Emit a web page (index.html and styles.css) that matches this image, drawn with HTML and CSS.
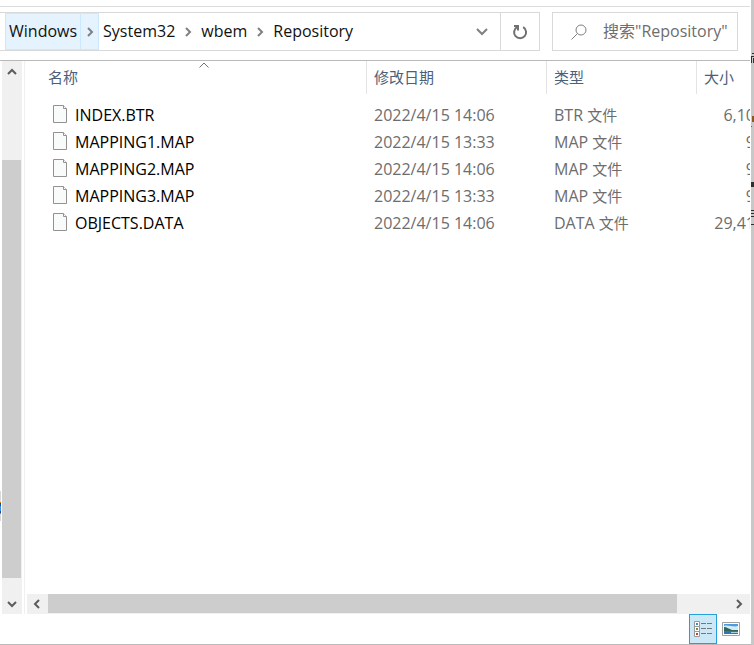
FILE: index.html
```html
<!DOCTYPE html>
<html lang="zh-CN">
<head>
<meta charset="utf-8">
<title>Repository</title>
<link rel="stylesheet" href="styles.css">
</head>
<body>
<div class="desktop">
<main class="window">
  <div class="toolbar">
    <nav class="address" aria-label="Path">
      <a class="crumb crumb-hot" href="#">Windows</a>
      <button class="sep sep-hot" aria-label="Windows"><svg width="8" height="10" viewBox="0 0 8 10"><path d="M2 1l4 4-4 4"/></svg></button>
      <a class="crumb" href="#">System32</a>
      <button class="sep" aria-label="System32"><svg width="8" height="10" viewBox="0 0 8 10"><path d="M2 1l4 4-4 4"/></svg></button>
      <a class="crumb" href="#">wbem</a>
      <button class="sep" aria-label="wbem"><svg width="8" height="10" viewBox="0 0 8 10"><path d="M2 1l4 4-4 4"/></svg></button>
      <a class="crumb" href="#">Repository</a>
      <button class="history" aria-label="History"><svg width="12" height="8" viewBox="0 0 12 8"><path d="M1 1l5 5 5-5"/></svg></button>
    </nav>
    <button class="refresh" aria-label="Refresh"><svg width="16" height="16" viewBox="0 0 16 16"><path d="M11.200 3.200A6 6 0 1 1 5 3.200"/><path d="M2 2h4v4.500"/></svg></button>
    <label class="search">
      <svg width="18" height="18" viewBox="0 0 18 18"><circle cx="11" cy="7" r="5"/><path d="M7.400 10.600L1.500 16.500"/></svg>
      <input type="text" aria-label="Search" placeholder="搜索&quot;Repository&quot;">
    </label>
  </div>

  <div class="body">
    <div class="vscroll">
      <button class="arrow-v" aria-label="Up"><svg width="10" height="8" viewBox="0 0 10 8"><path d="M1 6l4-4 4 4"/></svg></button>
      <div class="v-before"></div>
      <div class="v-thumb"></div>
      <div class="v-after"></div>
      <button class="arrow-v" aria-label="Down"><svg width="10" height="8" viewBox="0 0 10 8"><path d="M1 2l4 4 4-4"/></svg></button>
    </div>
    <section class="content">
      <div class="list">
        <table>
          <colgroup><col class="c-name"><col class="c-date"><col class="c-type"><col class="c-size"></colgroup>
          <thead>
            <tr>
              <th class="sorted">名称<svg class="sort" width="10" height="6" viewBox="0 0 10 6"><path d="M.5 5.500L5 1l4.500 4.500"/></svg></th>
              <th>修改日期</th><th>类型</th><th>大小</th>
            </tr>
          </thead>
          <tbody>
            <tr><td><svg class="file" width="14" height="18" viewBox="0 0 14 18"><path d="M.5.5h10l3 3v14H.5z"/><path d="M10.500.5v3h3"/></svg>INDEX.BTR</td><td>2022/4/15 14:06</td><td>BTR <span class="zh">文件</span></td><td>6,10</td></tr>
            <tr><td><svg class="file" width="14" height="18" viewBox="0 0 14 18"><path d="M.5.5h10l3 3v14H.5z"/><path d="M10.500.5v3h3"/></svg>MAPPING1.MAP</td><td>2022/4/15 13:33</td><td>MAP <span class="zh">文件</span></td><td>9</td></tr>
            <tr><td><svg class="file" width="14" height="18" viewBox="0 0 14 18"><path d="M.5.5h10l3 3v14H.5z"/><path d="M10.500.5v3h3"/></svg>MAPPING2.MAP</td><td>2022/4/15 14:06</td><td>MAP <span class="zh">文件</span></td><td>9</td></tr>
            <tr><td><svg class="file" width="14" height="18" viewBox="0 0 14 18"><path d="M.5.5h10l3 3v14H.5z"/><path d="M10.500.5v3h3"/></svg>MAPPING3.MAP</td><td>2022/4/15 13:33</td><td>MAP <span class="zh">文件</span></td><td>9</td></tr>
            <tr><td><svg class="file" width="14" height="18" viewBox="0 0 14 18"><path d="M.5.5h10l3 3v14H.5z"/><path d="M10.500.5v3h3"/></svg>OBJECTS.DATA</td><td>2022/4/15 14:06</td><td>DATA <span class="zh">文件</span></td><td>29,41</td></tr>
          </tbody>
        </table>
      </div>
      <div class="hscroll">
        <button class="arrow-h" aria-label="Left"><svg width="8" height="10" viewBox="0 0 8 10"><path d="M6 1L2 5l4 4"/></svg></button>
        <div class="h-thumb"></div>
        <div class="h-after"></div>
        <button class="arrow-h" aria-label="Right"><svg width="8" height="10" viewBox="0 0 8 10"><path d="M2 1l4 4-4 4"/></svg></button>
      </div>
    </section>
  </div>

  <footer class="status">
    <button class="view view-on" aria-label="Details">
      <svg width="18" height="16" viewBox="0 0 18 16">
        <g fill="#fff" stroke="#999"><path d="M.5.5h5v5h-5zM.5 5.500h5v5h-5zM.5 10.500h5v5h-5z"/></g>
        <path fill="#3f8fb5" d="M2 2h2v2H2z"/><path fill="#7c8a3c" d="M2 7h2v2H2z"/><path fill="#c0442c" d="M2 12h2v2H2z"/>
        <path stroke="#777" d="M7 2.500h5M13 2.500h5M7 7.500h5M13 7.500h5M7 12.500h5M13 12.500h5"/>
      </svg>
    </button>
    <button class="view" aria-label="Large icons">
      <svg width="18" height="14" viewBox="0 0 18 14">
        <path fill="#fff" stroke="#a0a0a0" d="M.5.5h17v13H.5z"/>
        <path fill="#4d9be0" d="M2 2h14v10H2z"/>
        <path fill="#d4ecf8" d="M2 4c3-1 4 0 6 0s5 1 8 0v4H2z"/>
        <path fill="#31665a" d="M2 5c3 0 5 2 8 3h6v1H2z"/>
        <path fill="#2d78b4" d="M2 9h14v3H2z"/>
        <path fill="#a9cfe4" d="M9 10h7v1H9z"/>
      </svg>
    </button>
  </footer>
</main>
<svg class="behind" width="3" height="240" viewBox="0 0 3 240">
  <path fill="#303030" d="M1 53h2v1H1zM0 56h3v1H0zM0 57h1v6H0zM2 58h1v5H2zM0 182h3v5H0zM0 210h3v1H0zM0 213h3v1H0zM0 216h3v1H0zM0 224h3v1H0z"/>
  <path fill="#8a5a20" d="M1 116h2v6H1z"/>
  <path fill="#4a6ab0" d="M0 126h1v1H0z"/>
</svg>
<svg class="behind-left" width="1" height="30" viewBox="0 0 1 30">
  <path fill="#d8d8d8" d="M0 0h1v30H0z"/><path fill="#c87820" d="M0 11h1v12H0z"/><path fill="#1c4f8c" d="M0 12h1v10H0z"/><path fill="#3c8fe0" d="M0 15h1v5H0z"/>
</svg>
</div>
</body>
</html>
```

FILE: styles.css
```css
* { box-sizing: border-box; }

body {
  margin: 0;
  color: #111;
  font: 16px/24px "Open Sans", "Noto Sans CJK SC", sans-serif;
}

button {
  display: flex;
  align-items: center;
  justify-content: center;
  padding: 0;
  border: 0;
  background: none;
}

svg { flex: none; fill: none; }

.desktop {
  position: relative;
  height: 100vh;
  padding-right: 3px;
  background: #c8c8c8;
}

.window {
  display: flex;
  flex-direction: column;
  height: 100%;
  padding-top: 6px;
  border-bottom: 1px solid #bbb;
  background: #fff;
}

.toolbar {
  display: flex;
  padding: 5px 12px 9px 0;
  margin-right: 1px;
  border-top: 1px solid #dcdcdc;
  border-bottom: 1px solid #b9b9b9;
}

.address {
  display: flex;
  flex: 1;
  height: 39px;
  padding-left: 5px;
  border: solid #d9d9d9;
  border-width: 1px 0;
}

.crumb {
  display: flex;
  align-items: center;
  padding: 0 4px 2px;
  color: #111;
  text-decoration: none;
}

.crumb-hot { border: 1px solid #cce8ff; padding: 0 3px 2px; background: #e5f3ff; }
.sep { width: 18px; }
.sep-hot { border: 1px solid #cce8ff; border-left: 0; background: #e5f3ff; }
.sep svg, .history svg { stroke: #808080; stroke-width: 2; }
.history { width: 37px; margin-left: auto; }

.refresh {
  width: 40px;
  height: 39px;
  border: 1px solid #d9d9d9;
}

.refresh svg { stroke: #707070; stroke-width: 2; }

.search {
  display: flex;
  align-items: center;
  gap: 15px;
  width: 186px;
  margin-left: 12px;
  padding-left: 17px;
  border: 1px solid #d9d9d9;
}

.search svg { stroke: #808080; stroke-width: 1; }

.search input {
  flex: 1;
  min-width: 0;
  padding: 0 0 2px;
  border: 0;
  outline: 0;
  font: 16px/24px "Open Sans", "Noto Sans CJK SC", sans-serif;
}

.search input::placeholder { color: #6d6d6d; opacity: 1; }

.body {
  display: flex;
  flex: 1;
  min-height: 0;
  padding-left: 2px;
}

.vscroll {
  display: flex;
  flex-direction: column;
  width: 20px;
  background: #f0f0f0;
}

.arrow-v { height: 21px; }
.arrow-v svg, .arrow-h svg { stroke: #5c5c5c; stroke-width: 2; }
.v-before { flex: 78; }
.v-thumb { flex: 418; margin-right: 1px; background: #cdcdcd; }
.v-after { flex: 15; }

.content {
  display: flex;
  flex: 1;
  flex-direction: column;
  min-width: 0;
  margin-left: 2px;
  border-left: 1px solid #f0f0f0;
}

.list {
  flex: 1;
  min-height: 0;
  margin-right: 1px;
  overflow: hidden;
}

table {
  width: calc(100% + 5px);
  border-collapse: separate;
  border-spacing: 0;
  table-layout: fixed;
}

.c-date { width: 180px; }
.c-type { width: 150px; }
.c-size { width: 58px; }

th {
  position: relative;
  height: 33px;
  padding: 0 0 2px 7px;
  border-right: 1px solid #e3e3e3;
  color: #4c607a;
  font-size: 15px;
  font-weight: 400;
  text-align: left;
}

th:first-child { padding-left: 23px; }
th:last-child { border-right: 0; }

.sort {
  position: absolute;
  top: 1px;
  left: calc(50% + 3px);
  stroke: #707070;
}

tbody::before { display: block; height: 7px; content: ""; }

td {
  height: 27px;
  padding: 0 0 0 7px;
  color: #6d6d6d;
  white-space: nowrap;
}

td:first-child { padding-left: 28px; color: #000; }
td:last-child { padding: 0; text-align: right; }
.zh { font-size: 15px; }

.file {
  margin-right: 8px;
  vertical-align: -2px;
  fill: #f9fafa;
  stroke: #929292;
}

.hscroll {
  display: flex;
  height: 20px;
  margin: 0 1px 0 2px;
  background: #f0f0f0;
}

.arrow-h { width: 21px; padding-right: 2px; }
.h-thumb { flex: 629; margin-bottom: 1px; background: #cdcdcd; }
.h-after { flex: 52; }

.status {
  display: flex;
  justify-content: flex-end;
  padding-right: 6px;
}

.view { width: 28px; height: 30px; }
.view-on { border: 1px solid #26a0da; background: #cce8f6; }

.behind { position: absolute; top: 0; right: 0; }
.behind-left { position: absolute; top: 491px; left: 0; }
```
